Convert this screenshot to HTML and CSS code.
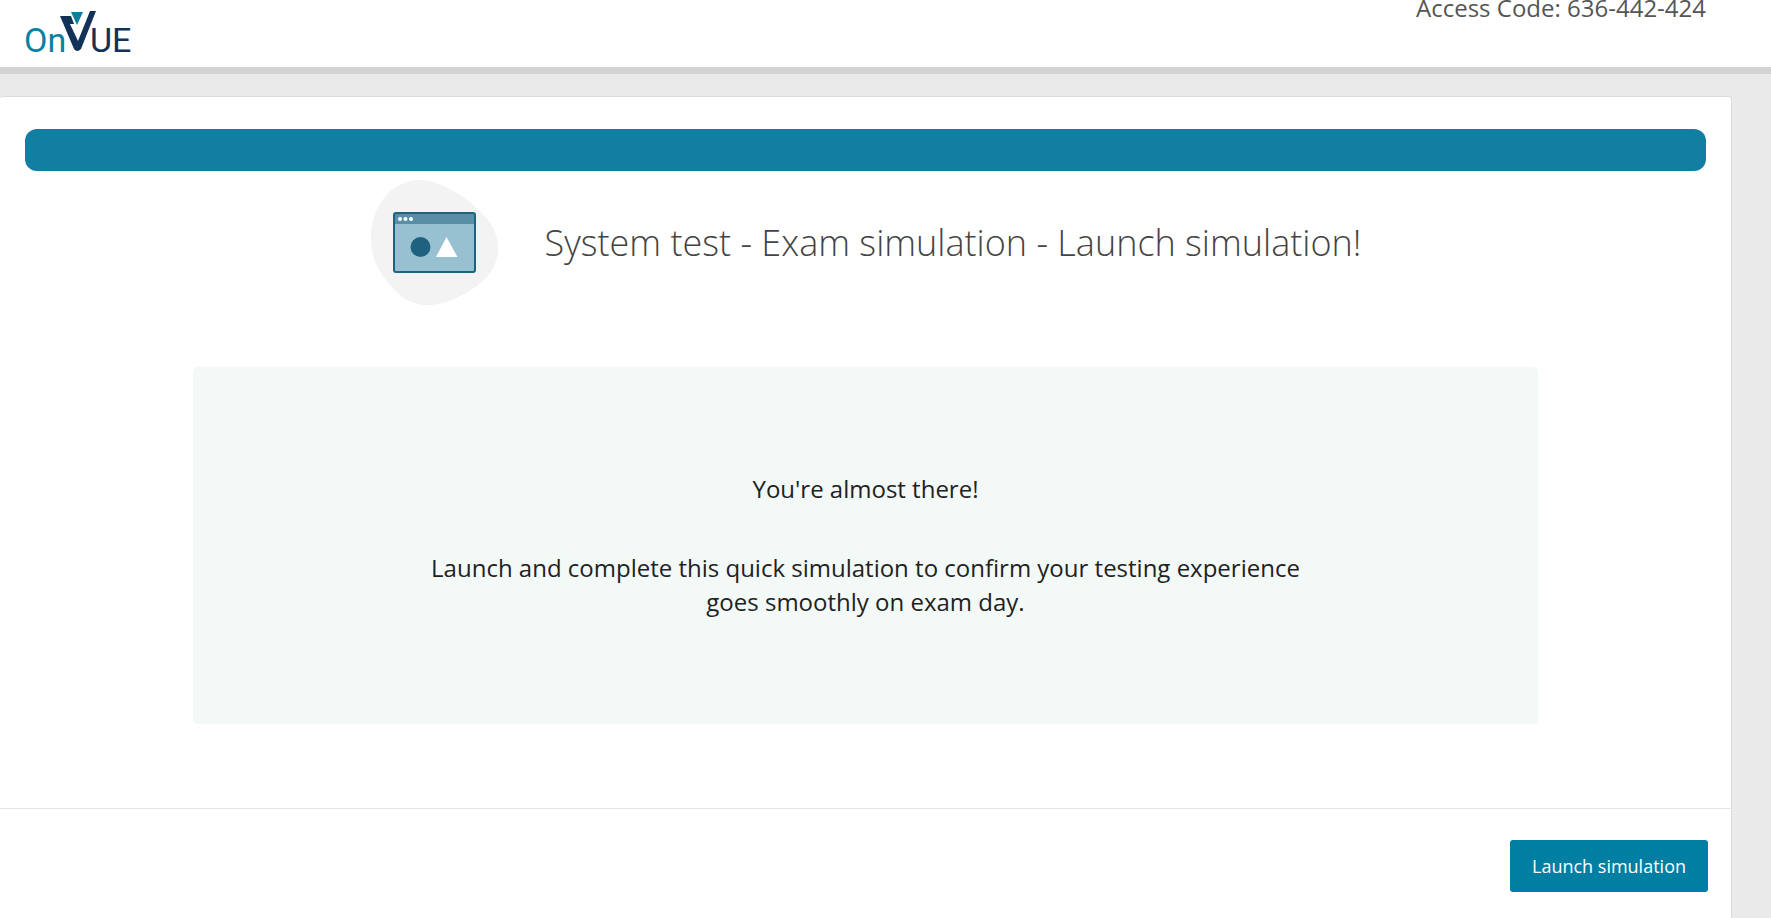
FILE: index.html
```html
<!DOCTYPE html>
<html lang="en">
<head>
<meta charset="utf-8">
<title>OnVUE - System test</title>
<link rel="stylesheet" href="styles.css">
</head>
<body>
<header class="header">
  <svg class="logo" viewBox="0 0 106 44" role="img" aria-label="OnVUE">
    <text class="logo-on" x="-1" y="42">On</text>
    <path fill="#123258" d="M35 6H46L49 14H45L53 31L65 1H71L56 39Q52 43 49 39L38 13Z"/>
    <path fill="#0d7f9f" d="M46 2H58L52 15Z"/>
    <text class="logo-ue" x="65" y="42">UE</text>
  </svg>
  <p class="access">Access Code: 636-442-424</p>
</header>
<main class="card">
  <div class="content">
    <div class="progress"></div>
    <div class="title-row">
      <svg class="title-icon" viewBox="0 0 130 128" aria-hidden="true">
        <path fill="#f3f3f3" d="M1 59C1 28 21 1 50 1C69 1 95 17 111 33C122 45 129 56 128 72C126 96 106 110 86 119C69 127 47 131 30 116C11 99 1 82 1 59Z"/>
        <rect x="24" y="34" width="81" height="59" rx="2" fill="#97c0d1"/>
        <path fill="#588ea6" d="M24 34H105V45H24Z"/>
        <rect x="24" y="34" width="81" height="59" rx="2" fill="none" stroke="#1f6280" stroke-width="2"/>
        <g fill="#fff"><circle cx="30" cy="40" r="2"/><circle cx="35.500" cy="40" r="2"/><circle cx="41" cy="40" r="2"/><path d="M76.500 58L87.500 78H66Z"/></g>
        <circle cx="50.500" cy="68" r="10" fill="#1f6280"/>
      </svg>
      <h1 class="title">System test - Exam simulation - Launch simulation!</h1>
    </div>
    <section class="panel">
      <p>You're almost there!</p>
      <p>Launch and complete this quick simulation to confirm your testing experience goes smoothly on exam day.</p>
    </section>
  </div>
  <footer class="actions">
    <button class="launch" type="button">Launch simulation</button>
  </footer>
</main>
</body>
</html>
```
FILE: styles.css
```css
* { box-sizing: border-box; }
body {
  margin: 0;
  min-height: 100vh;
  display: flex;
  flex-direction: column;
  background: #eaeaea;
  color: #222;
  font-family: "Open Sans", "Noto Sans", sans-serif;
}
p, h1 { margin: 0; }
.header {
  display: flex;
  justify-content: space-between;
  align-items: flex-start;
  height: 74px;
  padding: 0 65px 0 25px;
  background: #fff;
  border-bottom: 7px solid #d3d3d3;
}
.logo { width: 106px; height: 44px; margin-top: 10px; overflow: visible; }
.logo text { font-family: Roboto, sans-serif; font-size: 34px; font-weight: 400; }
.logo-on { fill: #0d7f9f; }
.logo-ue { fill: #123258; }
.access { color: #555; font-size: 24px; line-height: 16px; }
.card {
  flex: 1;
  display: flex;
  flex-direction: column;
  margin: 22px 39px 0 0;
  background: #fff;
  border: 1px solid #dcdcdc;
  border-width: 1px 1px 0 0;
  border-radius: 3px 3px 0 0;
}
.content { flex: 1; padding: 32px 25px 84px; }
.progress { height: 42px; background: #127ea2; border-radius: 12px; }
.title-row {
  display: flex;
  justify-content: center;
  align-items: center;
  gap: 45px;
  margin-top: 8px;
}
.title-icon { width: 130px; height: 128px; }
.title { color: #444; font-size: 36px; font-weight: 300; line-height: 50px; }
.panel {
  display: flex;
  flex-direction: column;
  justify-content: center;
  align-items: center;
  gap: 45px;
  min-height: 357px;
  margin: 60px auto 0;
  padding: 40px;
  width: 80%;
  background: #f3f9f7;
  border-radius: 5px;
  font-size: 24px;
  line-height: 34px;
  text-align: center;
}
.panel p { max-width: 900px; }
.actions {
  display: flex;
  justify-content: flex-end;
  padding: 31px 23px 26px;
  border-top: 1px solid #e5e5e5;
}
.launch {
  height: 52px;
  padding: 0 22px;
  border: 0;
  border-radius: 3px;
  background: #007fa3;
  color: #fff;
  font: 18px/24px "Open Sans", "Noto Sans", sans-serif;
}
```
